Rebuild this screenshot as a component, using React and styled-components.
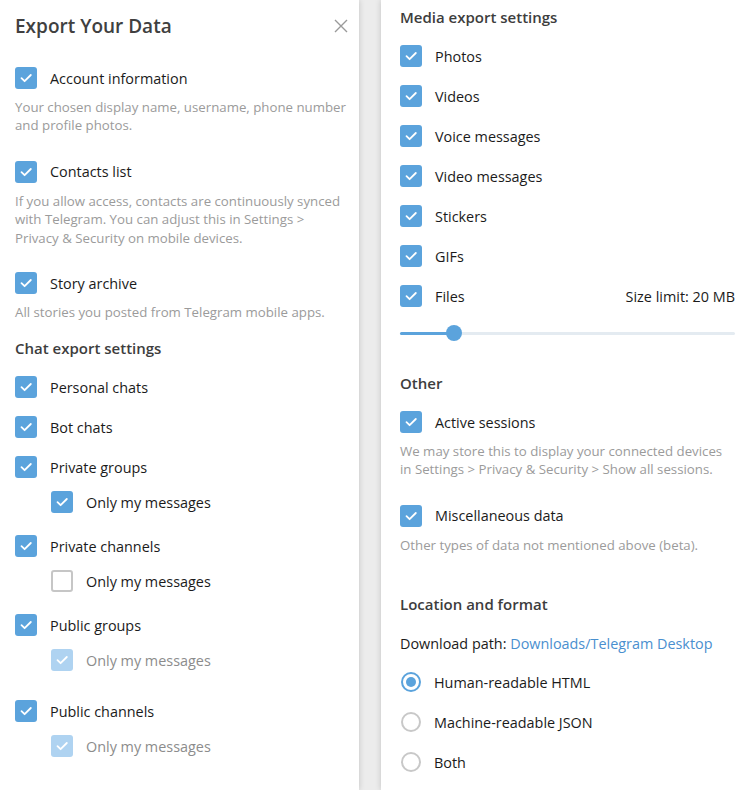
import styled, { createGlobalStyle } from 'styled-components';

const GlobalStyle = createGlobalStyle`
    html, body {
        margin: 0;
        padding: 0;
        background: #ececec;
    }
    body {
        font-family: "Open Sans", "Noto Sans", sans-serif;
        -webkit-font-smoothing: antialiased;
    }
`;

const BLUE = '#5ba3dc';

function CheckBox({ state = 'on' }) {
    return (
        <Box $state={state}>
            {state !== 'off' && (
                <svg width="22" height="22" viewBox="0 0 22 22">
                    <polyline
                        points="6.5,11.2 9.6,14.2 15.8,8"
                        fill="none"
                        stroke="#fff"
                        strokeWidth="1.8"
                        strokeLinecap="round"
                        strokeLinejoin="round"
                    />
                </svg>
            )}
        </Box>
    );
}

function Option({ label, state, sub, after, right }) {
    return (
        <Row $sub={sub} $after={after}>
            <CheckBox state={state} />
            <Label $muted={state === 'dim'}>{label}</Label>
            {right && <Right>{right}</Right>}
        </Row>
    );
}

function Radio({ label, on }) {
    return (
        <Row>
            <Circle $on={on} />
            <Label>{label}</Label>
        </Row>
    );
}

export default function App() {
    return (
        <Window>
            <GlobalStyle />
            <Panel>
                <Header>
                    <Title>Export Your Data</Title>
                    <Close>
                        <svg width="14" height="14" viewBox="0 0 14 14">
                            <path d="M1 1 L13 13 M13 1 L1 13" stroke="#9a9a9a" strokeWidth="1.4" />
                        </svg>
                    </Close>
                </Header>
                <Option label="Account information" />
                <Note $after={17}>
                    Your chosen display name, username, phone number and profile photos.
                </Note>
                <Option label="Contacts list" />
                <Note $after={16}>
                    If you allow access, contacts are continuously synced with Telegram. You can
                    adjust this in Settings &gt; Privacy &amp; Security on mobile devices.
                </Note>
                <Option label="Story archive" />
                <Note>All stories you posted from Telegram mobile apps.</Note>
                <Heading $top={12}>Chat export settings</Heading>
                <Option label="Personal chats" />
                <Option label="Bot chats" />
                <Option label="Private groups" />
                <Option label="Only my messages" sub after={9} />
                <Option label="Private channels" />
                <Option label="Only my messages" state="off" sub after={9} />
                <Option label="Public groups" />
                <Option label="Only my messages" state="dim" sub after={16} />
                <Option label="Public channels" />
                <Option label="Only my messages" state="dim" sub />
            </Panel>
            <Gap />
            <Panel $right>
                <Heading $top={2}>Media export settings</Heading>
                <Option label="Photos" />
                <Option label="Videos" />
                <Option label="Voice messages" />
                <Option label="Video messages" />
                <Option label="Stickers" />
                <Option label="GIFs" />
                <Option label="Files" right="Size limit: 20 MB" />
                <Slider>
                    <Track>
                        <Fill style={{ width: '16%' }} />
                        <Thumb style={{ left: '16%' }} />
                    </Track>
                </Slider>
                <Heading $top={25}>Other</Heading>
                <Option label="Active sessions" />
                <Note $after={17}>
                    We may store this to display your connected devices in Settings &gt; Privacy
                    &amp; Security &gt; Show all sessions.
                </Note>
                <Option label="Miscellaneous data" />
                <Note>Other types of data not mentioned above (beta).</Note>
                <Heading $top={35}>Location and format</Heading>
                <PathRow>
                    Download path: <Link>Downloads/Telegram Desktop</Link>
                </PathRow>
                <Radio label="Human-readable HTML" on />
                <Radio label="Machine-readable JSON" />
                <Radio label="Both" />
            </Panel>
        </Window>
    );
}

const Window = styled.div`
    display: flex;
    width: 741px;
    height: 790px;
    overflow: hidden;
    background: #ececec;
`;

const Panel = styled.div`
    display: flex;
    flex-direction: column;
    box-sizing: border-box;
    background: #fff;
    height: 100%;
    width: ${(p) => (p.$right ? '360px' : '359px')};
    padding: ${(p) => (p.$right ? '0 6px 0 19px' : '0 10px 0 15px')};
    box-shadow: 0 0 6px rgba(0, 0, 0, 0.18);
    flex-shrink: 0;
`;

const Gap = styled.div`
    width: 22px;
    flex-shrink: 0;
`;

const Header = styled.div`
    display: flex;
    align-items: center;
    justify-content: space-between;
    height: 52px;
    margin-bottom: 6px;
`;

const Title = styled.div`
    font-size: 19px;
    font-weight: 600;
    color: #404040;
`;

const Close = styled.div`
    display: flex;
    margin-right: 1px;
`;

const Heading = styled.div`
    font-size: 15px;
    font-weight: 600;
    color: #3d3d3d;
    line-height: 30px;
    margin-top: ${(p) => p.$top || 0}px;
    margin-bottom: 4px;
`;

const Row = styled.div`
    display: flex;
    align-items: center;
    height: ${(p) => (p.$sub ? 30 : 40)}px;
    padding-left: ${(p) => (p.$sub ? 36 : 0)}px;
    margin-bottom: ${(p) => p.$after || 0}px;
    flex-shrink: 0;
`;

const Box = styled.div`
    box-sizing: border-box;
    width: 22px;
    height: 22px;
    border-radius: 3px;
    flex-shrink: 0;
    background: ${(p) => (p.$state === 'on' ? BLUE : p.$state === 'dim' ? '#afd3f1' : '#fff')};
    border: ${(p) => (p.$state === 'off' ? '2px solid #c6c6c6' : 'none')};

    svg {
        display: block;
    }
`;

const Label = styled.span`
    margin-left: 13px;
    font-size: 14.4px;
    color: ${(p) => (p.$muted ? '#8c8c8c' : '#1b1b1b')};
`;

const Right = styled.span`
    margin-left: auto;
    font-size: 14.4px;
    color: #1b1b1b;
`;

const Note = styled.div`
    font-size: 13.25px;
    line-height: 18.4px;
    color: #9b9b9b;
    margin-bottom: ${(p) => p.$after || 0}px;
`;

const Slider = styled.div`
    display: flex;
    align-items: center;
    height: 20px;
    margin-top: 7px;
`;

const Track = styled.div`
    position: relative;
    flex: 1;
    height: 3px;
    border-radius: 2px;
    background: #e4ebf1;
`;

const Fill = styled.div`
    height: 100%;
    border-radius: 2px;
    background: ${BLUE};
`;

const Thumb = styled.div`
    position: absolute;
    top: 50%;
    width: 16px;
    height: 16px;
    margin: -8px 0 0 -8px;
    border-radius: 50%;
    background: ${BLUE};
`;

const PathRow = styled.div`
    height: 36px;
    line-height: 36px;
    margin-top: 3px;
    font-size: 14.4px;
    color: #1b1b1b;
    white-space: nowrap;
`;

const Link = styled.span`
    color: #4a8fcf;
`;

const Circle = styled.div`
    position: relative;
    box-sizing: border-box;
    width: 20px;
    height: 20px;
    margin-left: 1px;
    border-radius: 50%;
    flex-shrink: 0;
    border: 2px solid ${(p) => (p.$on ? BLUE : '#c8c8c8')};

    &::after {
        content: '';
        display: ${(p) => (p.$on ? 'block' : 'none')};
        position: absolute;
        inset: 3px;
        border-radius: 50%;
        background: ${BLUE};
    }
`;
